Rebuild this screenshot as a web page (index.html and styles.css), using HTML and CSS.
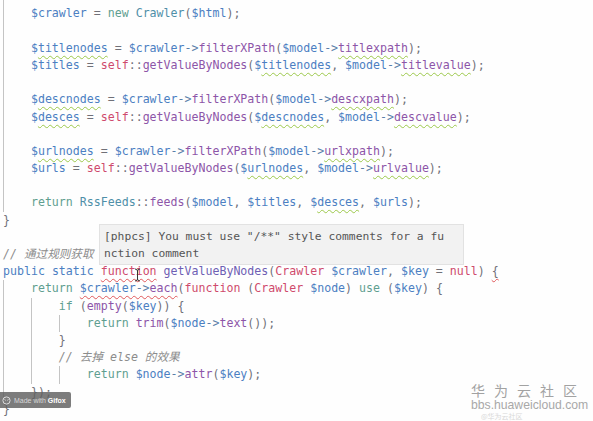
FILE: index.html
```html
<!DOCTYPE html>
<html>
<head>
<meta charset="utf-8">
<link rel="stylesheet" href="styles.css">
</head>
<body>
<div class="editor">
<div class="code">
<div class="ln"><span class="ig">    </span></div>
<div class="ln"><span class="ig">    </span><span class="v">$crawler</span> <span class="p">=</span> <span class="k">new</span> <span class="t">Crawler</span><span class="p">(</span><span class="v">$html</span><span class="p">);</span></div>
<div class="ln"><span class="ig">    </span></div>
<div class="ln"><span class="ig">    </span><span class="v">$<span class="sg">titlenodes</span></span> <span class="p">=</span> <span class="v">$crawler</span><span class="ar">-&gt;</span><span class="f">filterXPath</span><span class="p">(</span><span class="v">$model</span><span class="ar">-&gt;</span><span class="f sg">titlexpath</span><span class="p">);</span></div>
<div class="ln"><span class="ig">    </span><span class="v">$titles</span> <span class="p">=</span> <span class="r">self</span><span class="p">::</span><span class="f">getValueByNodes</span><span class="p">(</span><span class="v">$<span class="sg">titlenodes</span></span><span class="p">,</span> <span class="v">$model</span><span class="ar">-&gt;</span><span class="f sg">titlevalue</span><span class="p">);</span></div>
<div class="ln"><span class="ig">    </span></div>
<div class="ln"><span class="ig">    </span><span class="v">$<span class="sg">descnodes</span></span> <span class="p">=</span> <span class="v">$crawler</span><span class="ar">-&gt;</span><span class="f">filterXPath</span><span class="p">(</span><span class="v">$model</span><span class="ar">-&gt;</span><span class="f sg">descxpath</span><span class="p">);</span></div>
<div class="ln"><span class="ig">    </span><span class="v">$<span class="sg">desces</span></span> <span class="p">=</span> <span class="r">self</span><span class="p">::</span><span class="f">getValueByNodes</span><span class="p">(</span><span class="v">$<span class="sg">descnodes</span></span><span class="p">,</span> <span class="v">$model</span><span class="ar">-&gt;</span><span class="f sg">descvalue</span><span class="p">);</span></div>
<div class="ln"><span class="ig">    </span></div>
<div class="ln"><span class="ig">    </span><span class="v">$<span class="sg">urlnodes</span></span> <span class="p">=</span> <span class="v">$crawler</span><span class="ar">-&gt;</span><span class="f">filterXPath</span><span class="p">(</span><span class="v">$model</span><span class="ar">-&gt;</span><span class="f sg">urlxpath</span><span class="p">);</span></div>
<div class="ln"><span class="ig">    </span><span class="v">$urls</span> <span class="p">=</span> <span class="r">self</span><span class="p">::</span><span class="f">getValueByNodes</span><span class="p">(</span><span class="v">$<span class="sg">urlnodes</span></span><span class="p">,</span> <span class="v">$model</span><span class="ar">-&gt;</span><span class="f sg">urlvalue</span><span class="p">);</span></div>
<div class="ln"><span class="ig">    </span></div>
<div class="ln"><span class="ig">    </span><span class="k">return</span> <span class="t">RssFeeds</span><span class="p">::</span><span class="f">feeds</span><span class="p">(</span><span class="v">$model</span><span class="p">,</span> <span class="v">$titles</span><span class="p">,</span> <span class="v">$<span class="sg">desces</span></span><span class="p">,</span> <span class="v">$urls</span><span class="p">);</span></div>
<div class="ln"><span class="p">}</span></div>
<div class="ln"></div>
<div class="ln"><span class="c">// 通过规则获取</span></div>
<div class="ln"><span class="b">public</span> <span class="b">static</span> <span class="r sr">function</span> <span class="fd">getValueByNodes</span><span class="p">(</span><span class="r">Crawler</span> <span class="v">$crawler</span><span class="p">,</span> <span class="v">$key</span> <span class="p">=</span> <span class="r">null</span><span class="p">)</span> <span class="p sr">{</span></div>
<div class="ln"><span class="ig">    </span><span class="k">return</span> <span class="sr"><span class="v">$crawler</span><span class="ar">-&gt;</span><span class="f">each</span></span><span class="p">(</span><span class="r">function</span> <span class="p">(</span><span class="r">Crawler</span> <span class="v">$node</span><span class="p">)</span> <span class="k">use</span> <span class="p">(</span><span class="v">$key</span><span class="p">)</span> <span class="p">{</span></div>
<div class="ln"><span class="ig">    </span><span class="ig">    </span><span class="k">if</span> <span class="p">(</span><span class="f">empty</span><span class="p">(</span><span class="v">$key</span><span class="p">))</span> <span class="p">{</span></div>
<div class="ln"><span class="ig">    </span><span class="ig">    </span><span class="ig">    </span><span class="k">return</span> <span class="f">trim</span><span class="p">(</span><span class="v">$node</span><span class="ar">-&gt;</span><span class="f">text</span><span class="p">());</span></div>
<div class="ln"><span class="ig">    </span><span class="ig">    </span><span class="p">}</span></div>
<div class="ln"><span class="ig">    </span><span class="ig">    </span><span class="c">// 去掉 else 的效果</span></div>
<div class="ln"><span class="ig">    </span><span class="ig">    </span><span class="ig">    </span><span class="k">return</span> <span class="v">$node</span><span class="ar">-&gt;</span><span class="f">attr</span><span class="p">(</span><span class="v">$key</span><span class="p">);</span></div>
<div class="ln"><span class="ig">    </span><span class="p">});</span></div>
<div class="ln"><span class="p">}</span></div>
</div>

<div class="tooltip">
<div class="tip-line">[phpcs] You must use "/**" style comments for a fu</div>
<div class="tip-line">nction comment</div>
</div>

<svg class="ibeam" width="7" height="14" viewBox="0 0 7 14"><path d="M1 1 Q3.5 1 3.5 3 L3.5 11 Q3.5 13 1 13 M6 1 Q3.5 1 3.5 3 M3.5 11 Q3.5 13 6 13" fill="none" stroke="#333" stroke-width="1"/></svg>

<div class="gifox">
<svg class="gifox-icon" width="9" height="9" viewBox="0 0 9 9"><circle cx="4.5" cy="4.5" r="3.6" fill="none" stroke="#ddd" stroke-width="1"/><path d="M2.6 3.2 L3.6 4.6 M6.4 3.2 L5.4 4.6" stroke="#ddd" stroke-width="0.8"/></svg>
<span class="gifox-text">Made with <b>Gifox</b></span>
</div>

<div class="watermark">
<div class="wm-cn">华为云社区</div>
<div class="wm-url">bbs.huaweicloud.com</div>
<div class="wm-weibo">@华为云社区</div>
</div>
</div>
</body>
</html>
```

FILE: styles.css
```css
html, body {
  margin: 0;
  padding: 0;
  background: #ffffff;
}

.editor {
  position: relative;
  width: 593px;
  height: 421px;
  overflow: hidden;
  background: #fefefe;
}

.code {
  margin-top: -11.8px;
  padding-left: 3px;
  font-family: "DejaVu Sans Mono", "Noto Sans CJK SC", monospace;
  font-size: 11.6px;
  line-height: 17.2px;
  color: #6f6f78;
}

.ln {
  height: 17.2px;
  white-space: pre;
}

.ig {
  display: inline-block;
  background: linear-gradient(#c4c4c4, #c4c4c4) no-repeat left top / 1px 100%;
}

.v { color: #4c7fc2; }
.p { color: #707078; }
.ar { color: #5b7fa9; }
.f { color: #8d55a8; }
.fd { color: #6e5fb4; }
.r { color: #cf4a6c; }
.k { color: #5f9e90; }
.t { color: #4f8fa8; }
.b { color: #4c7fc2; }
.c {
  color: #8c8c8c;
  font-style: italic;
}

.sg {
  text-decoration: underline wavy #9cc84a;
  text-decoration-thickness: 1px;
  text-underline-offset: 3px;
}

.sr {
  text-decoration: underline wavy #e0585a;
  text-decoration-thickness: 1px;
  text-underline-offset: 3px;
}

.tooltip {
  position: absolute;
  left: 99px;
  top: 224px;
  width: 356px;
  height: 34px;
  padding: 3px 3px 2px 4px;
  background: #f2f2f2;
  border: 1px solid #e2e2e2;
  font-family: "DejaVu Sans Mono", monospace;
  font-size: 11.3px;
  line-height: 17px;
  color: #555555;
}

.tip-line {
  white-space: pre;
}

.ibeam {
  position: absolute;
  left: 134px;
  top: 268px;
}

.gifox {
  position: absolute;
  left: 0;
  top: 392px;
  width: 71px;
  height: 16px;
  display: flex;
  align-items: center;
  gap: 3px;
  padding-left: 2px;
  box-sizing: border-box;
  background: rgba(95, 95, 95, 0.82);
  border-radius: 0 2px 2px 0;
}

.gifox-text {
  font-family: "Liberation Sans", Arial, sans-serif;
  font-size: 7px;
  color: #d8d8d8;
  white-space: nowrap;
}

.gifox-text b {
  color: #ffffff;
}

.watermark {
  position: absolute;
  left: 471px;
  top: 381px;
  display: flex;
  flex-direction: column;
  align-items: flex-start;
}

.wm-cn {
  font-family: "Noto Sans CJK SC", sans-serif;
  font-size: 14px;
  line-height: 18px;
  letter-spacing: 9px;
  color: #a2a2a2;
}

.wm-url {
  font-family: "Liberation Sans", Arial, sans-serif;
  font-size: 12.2px;
  line-height: 13px;
  color: #a8a8a8;
}

.wm-weibo {
  margin-left: 10px;
  font-family: "Noto Sans CJK SC", sans-serif;
  font-size: 7px;
  line-height: 9px;
  color: #d8d8d8;
}
```
